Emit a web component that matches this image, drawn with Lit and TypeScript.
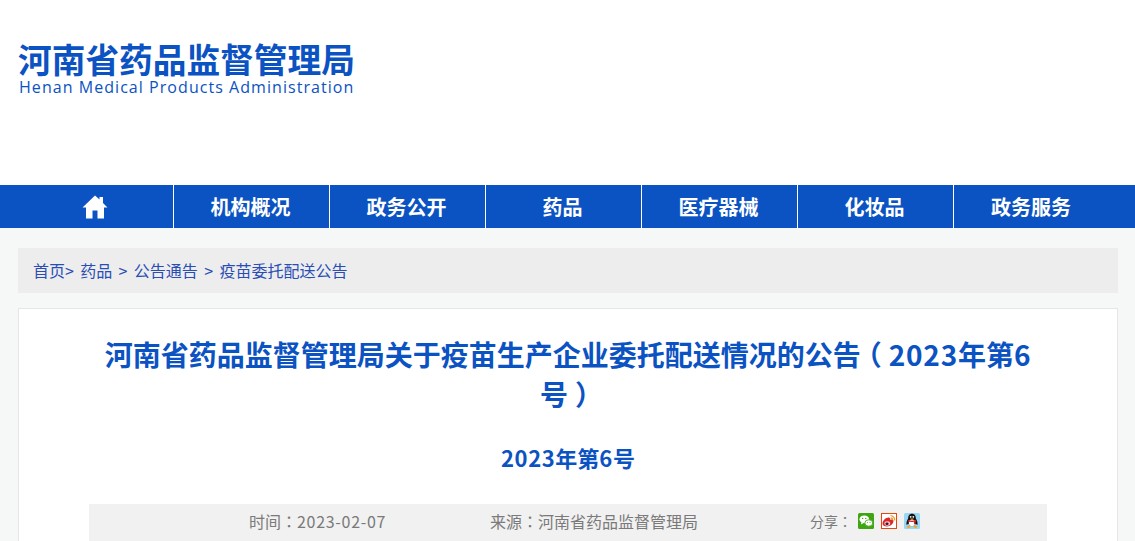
import { LitElement, html, css, unsafeCSS } from "lit";
import { customElement } from "lit/decorators.js";

const FONT = unsafeCSS(`"Noto Sans CJK SC", "Open Sans", sans-serif`);
const TC = unsafeCSS(`"Noto Sans CJK TC", sans-serif`);

@customElement("app-root")
export class AppRoot extends LitElement {
  static styles = css`
    :host { display: block; height: 541px; overflow: hidden; background: #f6f8f8; font-family: ${FONT}; }
    .head { height: 185px; background: #fff; box-sizing: border-box; padding: 41px 0 0 18px; }
    .logo { width: 336px; color: #0b52c2; }
    .logo-cn { font-size: 33.7px; font-weight: 700; line-height: 36px; white-space: nowrap; }
    .logo-en { font-family: "Open Sans", sans-serif; font-size: 16px; line-height: 20px; letter-spacing: 1.05px; white-space: nowrap; margin-left: 1px; }
    .nav { height: 43px; background: #0b52c2; padding-left: 18px; display: flex; }
    .nav a { width: 156px; box-sizing: border-box; border-right: 1px solid #fff; padding-right: 2px; display: flex; align-items: center; justify-content: center; color: #fff; font-size: 20px; font-weight: 700; }
    .nav a:last-child { border-right: 0; }
    .nav svg { width: 26px; height: 24px; display: block; }
    .main { padding: 20px 17px 0 18px; }
    .crumb { height: 45px; background: #ededed; box-sizing: border-box; padding: 0 0 2px 15px; display: flex; align-items: center; font-size: 16px; color: #2a4db5; white-space: pre; word-spacing: -0.4px; }
    .card { margin-top: 15px; background: #fff; border: 1px solid #e6e6e6; padding-top: 25px; height: 300px; box-sizing: border-box; }
    h1 { width: 950px; margin: 0 auto; font-size: 28px; line-height: 40px; font-weight: 700; color: #0b52c2; text-align: center; }
    h2 { margin: 27px 0 0; font-size: 22px; line-height: 32px; font-weight: 700; color: #0b52c2; text-align: center; }
    .num { letter-spacing: 0.8px; }
    h2 .num { letter-spacing: 0.6px; }
    .par { font-feature-settings: "halt"; padding: 0 7px; }
    .meta { width: 958px; height: 40px; box-sizing: border-box; padding-bottom: 6px; margin: 31px auto 0; background: #f1f1f1; display: flex; align-items: center; color: #7a7a7a; font-size: 16px; }
    .meta .num { letter-spacing: 0.7px; }
    .colon { font-family: ${TC}; }
    .time { margin-left: 160px; width: 241px; }
    .src { width: 320px; }
    .share { font-size: 14px; display: flex; align-items: center; }
    .share span.lbl { width: 48px; }
    .share svg { width: 16px; height: 16px; display: block; margin-right: 7px; }
  `;
  render() {
    const items = ["机构概况", "政务公开", "药品", "医疗器械", "化妆品", "政务服务"];
    return html`
      <div class="head"><div class="logo">
        <div class="logo-cn">河南省药品监督管理局</div>
        <div class="logo-en">Henan Medical Products Administration</div>
      </div></div>
      <nav class="nav">
        <a><svg viewBox="0 0 26 24"><path fill="#fff" d="M13 0.5 0.5 12.500h3.500v11h6.500v-8h5v8H22v-11h3.500L21 8V2h-3.500v2.500z"/></svg></a>
        ${items.map((t) => html`<a>${t}</a>`)}
      </nav>
      <div class="main">
        <div class="crumb">首页&gt;  药品  &gt;  公告通告  &gt;  疫苗委托配送公告</div>
        <div class="card">
          <h1>河南省药品监督管理局关于疫苗生产企业委托配送情况的公告<span class="par">（</span><span class="num">2023</span>年第<span class="num">6</span>号<span class="par">）</span></h1>
          <h2><span class="num">2023</span>年第<span class="num">6</span>号</h2>
          <div class="meta">
            <div class="time">时间<span class="colon">：</span><span class="num">2023-02-07</span></div>
            <div class="src">来源<span class="colon">：</span>河南省药品监督管理局</div>
            <div class="share"><span class="lbl">分享<span class="colon">：</span></span>
              <svg viewBox="0 0 16 16"><rect width="16" height="16" rx="1.500" fill="#3fa512"/><ellipse cx="6.300" cy="6.300" rx="4.800" ry="3.900" fill="#fff"/><path d="M3.500 9 3 11.500 6 9.800z" fill="#fff"/><ellipse cx="10.800" cy="10" rx="3.900" ry="3.200" fill="#fff" stroke="#3fa512" stroke-width=".8"/><circle cx="4.700" cy="5.400" r=".7" fill="#3fa512"/><circle cx="7.800" cy="5.400" r=".7" fill="#3fa512"/><circle cx="9.600" cy="9.400" r=".5" fill="#3fa512"/><circle cx="12" cy="9.400" r=".5" fill="#3fa512"/></svg>
              <svg viewBox="0 0 16 16"><rect x=".5" y=".5" width="15" height="15" fill="#fff" stroke="#e8480d"/><path d="M1.500 10.500C1.700 7 5.500 4 8 4.500c1.500.3 1.200 1.800 1 2.400 1.700-.7 3.500-.3 3.500 1.200 0 3-3.200 5.400-6.500 5.400-2.700 0-4.600-1.200-4.500-3z" fill="#e0262b"/><ellipse cx="6.300" cy="10.500" rx="2.900" ry="2.200" fill="#f6c8c8"/><ellipse cx="6" cy="10.700" rx="1.600" ry="1.300" fill="#222"/><path d="M9.500 2.500a4.500 4.500 0 0 1 4.200 5M9.700 4.800a2.300 2.300 0 0 1 2 2.500" fill="none" stroke="#f09a1a" stroke-width="1.200"/></svg>
              <svg viewBox="0 0 16 16"><rect width="16" height="16" rx="1.500" fill="#9ad6f5"/><path d="M8 .8C5.200.8 4.200 3 4.200 5.300 3 7.500 2 9.800 2.600 12l1.800-1.200c.6 1.500 2 2.400 3.600 2.400s3-.9 3.600-2.400L13.400 12c.6-2.200-.4-4.500-1.600-6.700C11.800 3 10.800.8 8 .8z" fill="#111"/><ellipse cx="8" cy="9.800" rx="3.200" ry="3.400" fill="#fff"/><circle cx="6.700" cy="3.800" r=".9" fill="#fff"/><circle cx="9.300" cy="3.800" r=".9" fill="#fff"/><path d="M4.200 7C6.500 8 9.500 8 11.800 7l.5 1.400-1.200.6v2.800l-1.200-1.200V8.800c-1.300.3-2.500.3-3.800 0v.2L4 8.500z" fill="#e02020"/><path d="M6 5.400h4L8 6.800z" fill="#f5a81c"/><path d="M2.500 13.500 6 12.300l.8 1.700-2.800 1.200zM13.500 13.500 10 12.300l-.8 1.700 2.800 1.200z" fill="#f5a81c"/></svg>
            </div>
          </div>
        </div>
      </div>
    `;
  }
}
